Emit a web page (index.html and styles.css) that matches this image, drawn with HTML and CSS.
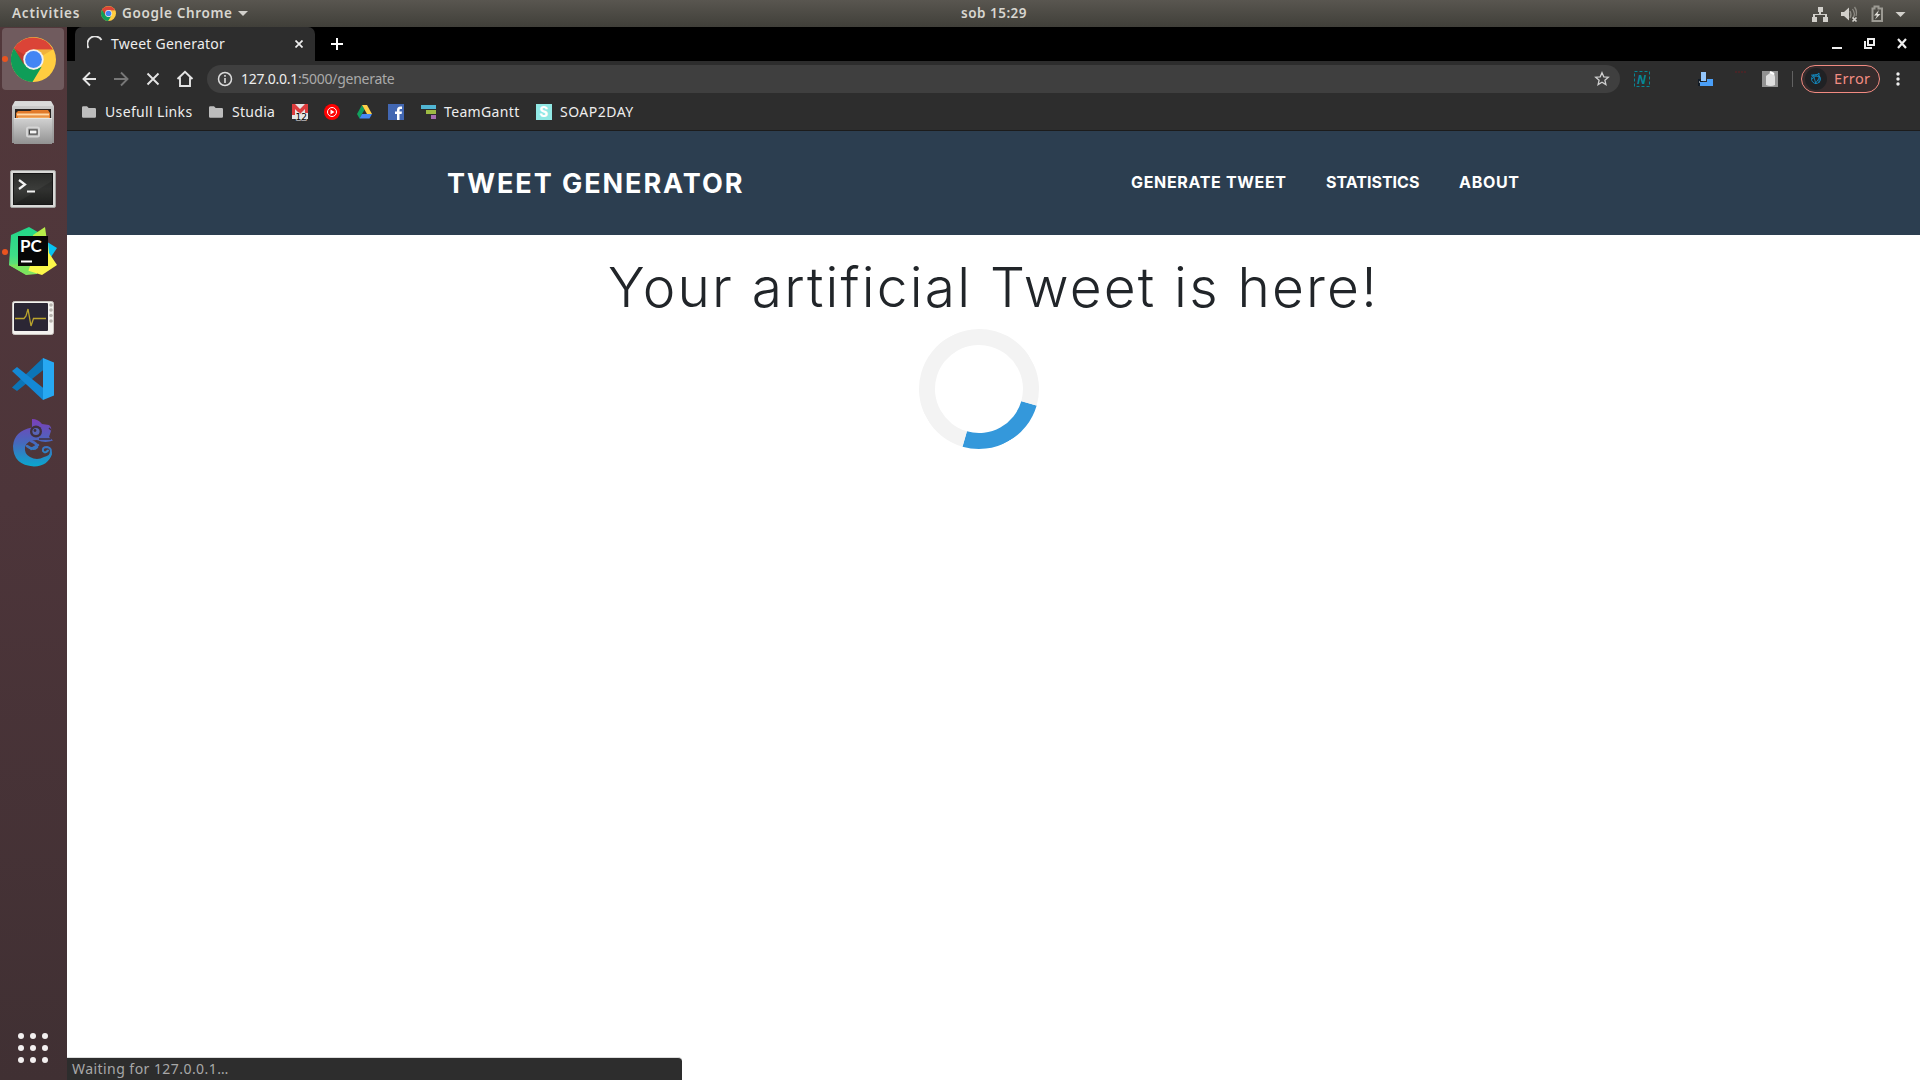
FILE: index.html
```
<!DOCTYPE html>
<html lang="en">
<head>
<meta charset="utf-8">
<title>Tweet Generator</title>
<link rel="stylesheet" href="styles.css">
</head>
<body>
<svg width="0" height="0" class="defs">
  <defs>
    <symbol id="chrome" viewBox="0 0 44 44">
      <circle cx="22" cy="22" r="22" fill="#ffcd40"/>
      <path d="M2.9 11A22 22 0 0 1 41.1 12.2H22L12.5 27Z" fill="#db4437"/>
      <path d="M2.9 11L12.8 26.5L22 32L30 29L21 44A22 22 0 0 1 2.9 11Z" fill="#0f9d58"/>
      <path d="M22 12.2H41L31 18Z" fill="#b8452f" opacity=".2"/>
      <path d="M3 11L12 27L14 18Z" fill="#8e2a20" opacity=".35"/>
      <circle cx="22" cy="22" r="10" fill="#f1f1f1"/>
      <circle cx="22" cy="22" r="8.200" fill="#4285f4"/>
    </symbol>
    <symbol id="folder" viewBox="0 0 14 12"><path d="M0 1.5Q0 .3 1.2.3H5L6.7 2H12.8Q14 2 14 3.2V10.500Q14 11.700 12.800 11.700H1.200Q0 11.700 0 10.500Z" fill="#bdbdbd"/></symbol>
    <linearGradient id="silver" x2="0" y2="1"><stop stop-color="#d2d2d2"/><stop offset="1" stop-color="#929292"/></linearGradient>
    <linearGradient id="screen" x2="0" y2="1"><stop stop-color="#2a2b29"/><stop offset=".5" stop-color="#3b3c3a"/><stop offset="1" stop-color="#242523"/></linearGradient>
    <linearGradient id="lizard" gradientUnits="userSpaceOnUse" x1="0" y1="0" x2="0" y2="48"><stop stop-color="#7b3fb9"/><stop offset=".5" stop-color="#4669bd"/><stop offset="1" stop-color="#08a9cf"/></linearGradient>
    <linearGradient id="green" x2="0" y2="1"><stop stop-color="#21d789"/><stop offset=".6" stop-color="#3fdc87"/><stop offset="1" stop-color="#8ce65c"/></linearGradient>
  </defs>
</svg>
<div class="topbar">
  <span class="activities">Activities</span>
  <svg class="app-logo" width="15" height="15"><use href="#chrome"/></svg>
  <span class="app-name">Google Chrome</span>
  <svg width="10" height="6"><path d="M0 0H10L5 5Z" fill="#d2d0cb"/></svg>
  <span class="clock">sob 15:29</span>
  <svg class="tray" width="96" height="18" viewBox="1812 4 96 18">
    <g fill="#d2d0cb"><path d="M1818 6h5v5h-2v2h6v3h1v5h-5v-5h2v-2h-10v2h2v5h-5v-5h1v-3h6v-2h-1z"/>
    <path d="M1841 11h3l5-4.500v13l-5-4.500h-3z"/><path d="M1895.500 11h10l-5 5z"/></g>
    <path d="M1850 10q2 3.500 0 7M1852.500 8q3.500 5 .5 9M1854.500 6q3 4 1.500 9" fill="none" stroke="#8c8a83" stroke-width="1.300"/>
    <path d="M1852.500 16.500l4 4m0-4l-4 4" stroke="#d2d0cb" stroke-width="1.700"/>
    <path d="M1872.500 7.500h2v-2h4v2h3.500v12.500h-9.500z" fill="none" stroke="#9c9a93" stroke-width="2"/>
    <path d="M1879 9l-5 5.500h3l-2 4 5.500-5.500h-3z" fill="#dedcd6"/>
  </svg>
</div>
<div class="desktop">
  <aside class="dock">
    <div class="dock-item active running"><svg width="45" height="45"><use href="#chrome"/></svg></div>
    <div class="dock-item"><svg width="42" height="44" viewBox="0 0 42 44">
      <path d="M3 0H39L42 5V42H0V5Z" fill="url(#silver)"/><path d="M3 .5H39L41 5H1Z" fill="#dadada"/>
      <path d="M3 8H39V18H3Z" fill="#272322"/><path d="M4 12l2-2h12l2-1h16l2 3v6H4Z" fill="#e27a2b"/><path d="M5 12.500h32v2H5z" fill="#ffd9a8"/><path d="M6 15.500h31v2H6z" fill="#f2a95f"/>
      <path d="M2 17H40V43H2Z" fill="url(#silver)"/><path d="M2 17.500H40" stroke="#e6e6e6"/>
      <rect x="15" y="26.500" width="12" height="9" rx="1.500" fill="#999" stroke="#d5d5d5" stroke-width="2"/><rect x="17.500" y="29" width="7.500" height="4" fill="#f5f5f5" stroke="#444"/>
    </svg></div>
    <div class="dock-item terminal"><svg width="46" height="38" viewBox="0 0 46 38">
      <rect x=".5" y=".5" width="45" height="37" rx="1.500" fill="#d9d9d7" stroke="#a2a2a0"/><rect x="3.500" y="3.500" width="39" height="31" fill="url(#screen)" stroke="#161616"/>
      <path d="M5 34L42 11V34Z" fill="#000" opacity=".16"/>
      <path d="M9 10l6 4.500L9 19M17 21.500h8" fill="none" stroke="#f2f2f2" stroke-width="2.200"/>
    </svg></div>
    <div class="dock-item running pycharm"><svg width="48" height="48" viewBox="0 0 48 48">
      <path d="M35 13L48 21L40 33Z" fill="#07c3f2"/><path d="M2 8L20 0L34 8L28 47L17 48L0 38Z" fill="url(#green)"/>
      <path d="M24 8L36 0L38 14L30 32L21 44Z" fill="#b8ee4a"/><path d="M20 36L39 16L40 26L48 38L33 48L17 43Z" fill="#fcf84a"/><path d="M0 38L18 48L22 36Z" fill="#7be35e"/>
      <rect x="9" y="9" width="30" height="30" fill="#060606"/><text x="11" y="24.500" class="pc">PC</text><path d="M12 33.500h11v2H12z" fill="#fff"/>
    </svg></div>
    <div class="dock-item monitor"><svg width="42" height="34" viewBox="0 0 42 34">
      <rect x=".5" y=".5" width="41" height="33" rx="2" fill="#f4f2ef" stroke="#cbc7c2"/><rect x="2" y="2" width="34" height="28" rx="1" fill="#2b2634"/>
      <path d="M3 17.500H12L14 15L16 8L19 25L21.500 17.500H34" fill="none" stroke="#bba52d" stroke-width="1.300"/>
      <g fill="#b6b2ad"><circle cx="39" cy="4" r="1.800"/><circle cx="39" cy="9" r="1.800"/><circle cx="39" cy="14.500" r="1.800"/><circle cx="39" cy="20" r="1.800"/></g>
    </svg></div>
    <div class="dock-item code"><svg width="42" height="42" viewBox="0 0 42 42">
      <path d="M0 29.500L5 33L35 9L31 0Z" fill="#0c75b7"/><path d="M0 13L5 9L35 33L31 42Z" fill="#1488d4"/><path d="M31 0L42 4.500V37.500L31 42Z" fill="#27a8f2"/>
    </svg></div>
    <div class="dock-item gitkraken"><svg width="41" height="48" viewBox="0 0 41 48">
      <path d="M19 0Q25 0 29 5L36 6Q39 8 38 12L36 18L40 21.500Q32 24.500 24 21Q14 21 12 28Q11 35 17 38Q24 42 31 38Q36 37 38 33L39 35Q35 47 21 47.500Q0 46 0 27Q1 12 19 8.500Z" fill="url(#lizard)"/>
      <g fill="none" stroke="url(#lizard)" stroke-linecap="round"><path d="M18 22Q25 25 24 28Q20 32 14 27M25 26L18 30" stroke-width="2.500"/><path d="M37 37Q40 29 34 28Q29 28 30 32Q32 35 35 31.500" stroke-width="2"/></g>
      <circle cx="23" cy="12.500" r="6" fill="#40303d"/><circle cx="23" cy="12.500" r="3.600" fill="#5964b6"/><circle cx="22" cy="11.500" r="1.400" fill="#40303d"/>
      <path d="M36 9l2 2M26 20h12" stroke="#40303d" stroke-width="1.300"/>
    </svg></div>
    <svg class="apps" width="32" height="32" viewBox="0 0 32 32" fill="#f3f0f0"><circle cx="4" cy="4" r="3"/><circle cx="16" cy="4" r="3"/><circle cx="28" cy="4" r="3"/><circle cx="4" cy="16" r="3"/><circle cx="16" cy="16" r="3"/><circle cx="28" cy="16" r="3"/><circle cx="4" cy="28" r="3"/><circle cx="16" cy="28" r="3"/><circle cx="28" cy="28" r="3"/></svg>
  </aside>
  <main class="browser">
    <div class="tabs">
      <div class="tab">
        <svg width="16" height="16" viewBox="0 0 16 16"><path d="M1.500 12A7 7 0 0 1 14.500 4" fill="none" stroke="#e3e3e3" stroke-width="1.900"/></svg>
        <span class="tab-title">Tweet Generator</span>
        <svg width="8" height="8" viewBox="0 0 8 8"><path d="M.5 .5l7 7m0-7l-7 7" stroke="#eee" stroke-width="1.700"/></svg>
      </div>
      <svg class="new-tab" width="12" height="12"><path d="M6 0v12M0 6h12" stroke="#fff" stroke-width="2"/></svg>
      <svg class="controls" width="76" height="12" viewBox="0 0 76 12" fill="none" stroke="#eee"><path d="M0 10h10" stroke-width="2"/><path d="M36 1h6v6h-6zM33 3v7h7" stroke-width="2"/><path d="M66 1l8 9m0-9l-8 9" stroke-width="2.200"/></svg>
    </div>
    <div class="toolbar">
      <svg class="nav-icons" width="112" height="18" viewBox="0 0 112 18" fill="none" stroke="#e4e4e4" stroke-width="1.900">
        <path d="M14 9H1.500M8 2.500L1.500 9L8 15.500"/><path d="M32 9H45M39 2.500L45.500 9L39 15.500" stroke="#777"/><path d="M65.500 3.500l11 11m0-11l-11 11"/><path d="M95.500 9L103 1.800L110.500 9M98 7.500V16H108V7.500"/>
      </svg>
      <div class="omnibox">
        <svg width="16" height="16" viewBox="0 0 16 16"><circle cx="8" cy="8" r="6.500" fill="none" stroke="#ddd" stroke-width="1.500"/><path d="M8 7v5M8 4v1.700" stroke="#ddd" stroke-width="1.600"/></svg>
        <span class="url"><b>127.0.0.1</b>:5000/generate</span>
        <svg width="16" height="16" viewBox="0 0 16 16"><path d="M8 1.700l1.800 4.100 4.500.4-3.400 3 1 4.400L8 11.300l-3.900 2.300 1-4.400-3.400-3 4.500-.4z" fill="none" stroke="#d0d0d0" stroke-width="1.300"/></svg>
      </div>
      <svg class="extensions" width="160" height="18" viewBox="1633 70 160 18">
        <rect x="1634.500" y="71.500" width="15" height="15" fill="none" stroke="#078594" stroke-dasharray="3 2"/><text x="1637" y="83.500" class="ext-n">N</text>
        <path d="M1698 79h5v7h-5z" fill="#111b26"/><path d="M1701 72h5v9h-5z" fill="#93c6fb"/><path d="M1700 82h7v-3h6v7h-13z" fill="#4a9ff8"/><path d="M1699 82h7" stroke="#fff" stroke-dasharray="1 6"/>
        <path d="M1735 72h11" stroke="#651f23" stroke-dasharray="2 1"/>
        <rect x="1762" y="71" width="16" height="16" fill="#929292"/><path d="M1766 76l4-3h4l1 4v8q-4 2-9 0z" fill="#dedede"/><path d="M1770 72l4 2" stroke="#fff" stroke-width="2"/>
        <path d="M1792.500 71v16" stroke="#626262"/>
      </svg>
      <div class="profile">
        <svg width="22" height="22" viewBox="0 0 22 22"><circle cx="11" cy="11" r="11" fill="#202124"/><g fill="none" stroke="#1389bf" stroke-width=".9"><circle cx="11" cy="11" r="4.500"/><path d="M6 7l9 2-5 7M7 11l7-6v10M8 6l3 10"/></g></svg>
        <span>Error</span>
      </div>
      <svg class="kebab" width="4" height="14" fill="#eee"><circle cx="2" cy="2" r="1.700"/><circle cx="2" cy="7" r="1.700"/><circle cx="2" cy="12" r="1.700"/></svg>
    </div>
    <nav class="bookmarks">
      <a class="bm-links"><svg width="14" height="12"><use href="#folder"/></svg><span>Usefull Links</span></a>
      <a class="bm-studia"><svg width="14" height="12"><use href="#folder"/></svg><span>Studia</span></a>
      <a class="bm-gmail"><svg class="mail" width="16" height="16" viewBox="0 0 16 16"><path d="M0 0h16v15H0z" fill="#e4e4e4"/><path d="M0 0h3l5 5 5-5h3v9h-3V5l-5 5-5-5v6H0z" fill="#dc3c3d"/><text x="3.500" y="15.500" class="count">12</text></svg></a>
      <a class="bm-music"><svg width="16" height="16"><circle cx="8" cy="8" r="8" fill="#f00"/><circle cx="8" cy="8" r="4.500" fill="none" stroke="#fff"/><path d="M6.500 5.500v5L10.500 8z" fill="#fff"/></svg></a>
      <a class="bm-drive"><svg width="15" height="14" viewBox="0 0 15 14"><path d="M5 0L7.500 4.500L2.500 13.500L0 9Z" fill="#11a15e"/><path d="M5 0H10L15 9H10Z" fill="#ffcf48"/><path d="M5 9H15L12.500 13.500H2.500Z" fill="#4688f4"/></svg></a>
      <a class="bm-face"><svg width="16" height="16"><path d="M0 0h16v16H0z" fill="#4267b2"/><path d="M9 16V10H7V7.500h2V6q0-3.500 3.500-3.500H14V5h-1.500q-1 0-1 1v1.500H14l-.4 2.500h-2.100v6z" fill="#fff"/></svg></a>
      <a class="bm-gantt"><svg width="16" height="14"><path d="M0 0h15v4H0z" fill="#51b6d4"/><path d="M5 5h10v4H5z" fill="#9dbb43"/><path d="M10 10h5v4h-5z" fill="#a66caf"/></svg><span>TeamGantt</span></a>
      <a class="bm-soap"><i>S</i><span>SOAP2DAY</span></a>
    </nav>
    <section class="page">
      <header class="site-header"><span class="brand">TWEET GENERATOR</span><span class="link generate">GENERATE TWEET</span><span class="link stats">STATISTICS</span><span class="link about">ABOUT</span></header>
      <h1>Your artificial Tweet is here!</h1>
      <div class="loader"></div>
      <div class="status">Waiting for 127.0.0.1…</div>
    </section>
  </main>
</div>
</body>
</html>
```
FILE: styles.css
```
* { box-sizing: border-box; }
body { margin: 0; width: 1920px; height: 1080px; overflow: hidden; font: 14.500px "Noto Sans", sans-serif; background: #fff; }
svg { display: block; flex: none; }
span { white-space: nowrap; }
.defs { position: absolute; }
.topbar { height: 27px; display: flex; align-items: center; background: linear-gradient(#595650, #403f39); color: #d8d6d0; font-size: 13.500px; font-weight: 600; padding-left: 12px; }
.topbar span { padding-bottom: 2px; }
.activities { width: 89px; letter-spacing: .8px; }
.app-name { margin-left: 6px; width: 116px; letter-spacing: .65px; }
.clock { margin-left: 713px; width: 70px; letter-spacing: .5px; }
.tray { margin-left: auto; margin-right: 12px; }
.desktop { display: flex; height: 1053px; }
.dock { width: 67px; display: flex; flex-direction: column; align-items: center; background: linear-gradient(#52383b, #4d353a 45%, #403033); padding: 0 1px 16px 0; }
.dock-item { position: relative; width: 62px; height: 62px; margin: 1px 0 1.300px; flex: none; display: flex; align-items: center; justify-content: center; border-radius: 4px; }
.active { background: #705b5e; }
.terminal { padding-top: 2px; }
.pycharm { padding-bottom: 2px; }
.monitor { padding-top: 4px; }
.code { padding-bottom: 2px; }
.gitkraken { padding-bottom: 4px; }
.running::before { content: ""; position: absolute; left: 0; top: 28px; width: 6px; height: 6px; border-radius: 50%; background: #e95420; }
.apps { margin-top: auto; }
.pc { font: bold 17px Lato, sans-serif; fill: #fff; }
.browser { width: 1853px; background: #2d2d2d; }
.tabs { height: 34px; display: flex; align-items: center; background: #000; padding-left: 8px; }
.tab { width: 240px; height: 34px; border-radius: 7px 7px 0 0; background: #2d2d2d; display: flex; align-items: center; padding-left: 12px; color: #eee; }
.tab-title { margin-left: 8px; width: 184px; font-size: 14px; letter-spacing: .25px; padding-bottom: 2px; }
.new-tab { margin-left: 16px; }
.controls { margin-left: auto; margin-right: 12px; }
.toolbar { height: 36px; display: flex; align-items: center; padding-left: 15px; }
.omnibox { margin-left: 13px; width: 1413px; height: 28px; border-radius: 14px; background: #3f3f3f; display: flex; align-items: center; padding: 0 10px; color: #aaa; }
.url { margin-left: 8px; flex: 1; font-size: 14px; letter-spacing: -.27px; padding-bottom: 2px; }
.url b { color: #eee; font-weight: 400; }
.extensions { margin-left: 13px; }
.ext-n { font: bold italic 12px "Open Sans", sans-serif; fill: #078594; }
.profile { margin-left: 8px; width: 79px; height: 28px; border: 1px solid #f28b82; border-radius: 14px; display: flex; align-items: center; padding-left: 3px; color: #f28b82; background: #352b2c; }
.profile span { margin-left: 7px; letter-spacing: .4px; padding-bottom: 2px; }
.kebab { margin-left: 16px; }
.bookmarks { height: 34px; border-bottom: 1px solid #1c1c1c; display: flex; align-items: center; padding: 0 0 4px 15px; color: #eee; font-size: 14px; }
.bookmarks a { display: flex; align-items: center; gap: 9px; flex: none; letter-spacing: .35px; }
.bm-links { width: 127px; }
.bookmarks .bm-studia { width: 83px; letter-spacing: .3px; }
.bm-gmail { width: 32px; }
.bm-music { width: 33px; }
.bm-drive { width: 31px; }
.bm-face { width: 33px; }
.bm-gantt { width: 115px; }
.bm-gantt svg { margin-right: -2px; }
.bm-soap i { width: 16px; height: 16px; background: #91e8e4; color: #fff; font: 900 14px/16px Roboto, sans-serif; text-align: center; }
.bookmarks .bm-soap { gap: 8px; letter-spacing: .5px; }
.mail { overflow: visible; }
.count { font: 9px "DejaVu Sans", sans-serif; letter-spacing: 0; fill: #000; stroke: #eee; stroke-width: 1px; paint-order: stroke; }
.page { height: 949px; background: #fff; display: flex; flex-direction: column; font-family: Inter, sans-serif; }
.site-header { height: 104px; background: #2c3e50; color: #fff; display: flex; align-items: center; padding-left: 380px; font-weight: 700; }
.brand { width: 684px; font-size: 27px; letter-spacing: 1.950px; }
.link { font-size: 16px; padding-bottom: 2px; }
.generate { width: 195px; letter-spacing: .67px; }
.stats { width: 133px; }
.about { letter-spacing: .7px; }
h1 { margin: 19px 0 0; height: 75px; line-height: 67px; font-size: 55px; font-weight: 300; color: #212529; text-align: center; letter-spacing: 2.200px; }
.loader { width: 120px; height: 120px; margin-left: 852px; border: 16px solid #f3f3f3; border-top-color: #3498db; border-radius: 50%; transform: rotate(151deg); }
.status { margin-top: auto; width: 615px; height: 23px; line-height: 22px; background: #2d2d2d; border-top: 1px solid #ddd; border-radius: 0 4px 0 0; color: #a8a8a8; padding-left: 5px; font-family: "Noto Sans", sans-serif; font-size: 14px; letter-spacing: .45px; }
```
